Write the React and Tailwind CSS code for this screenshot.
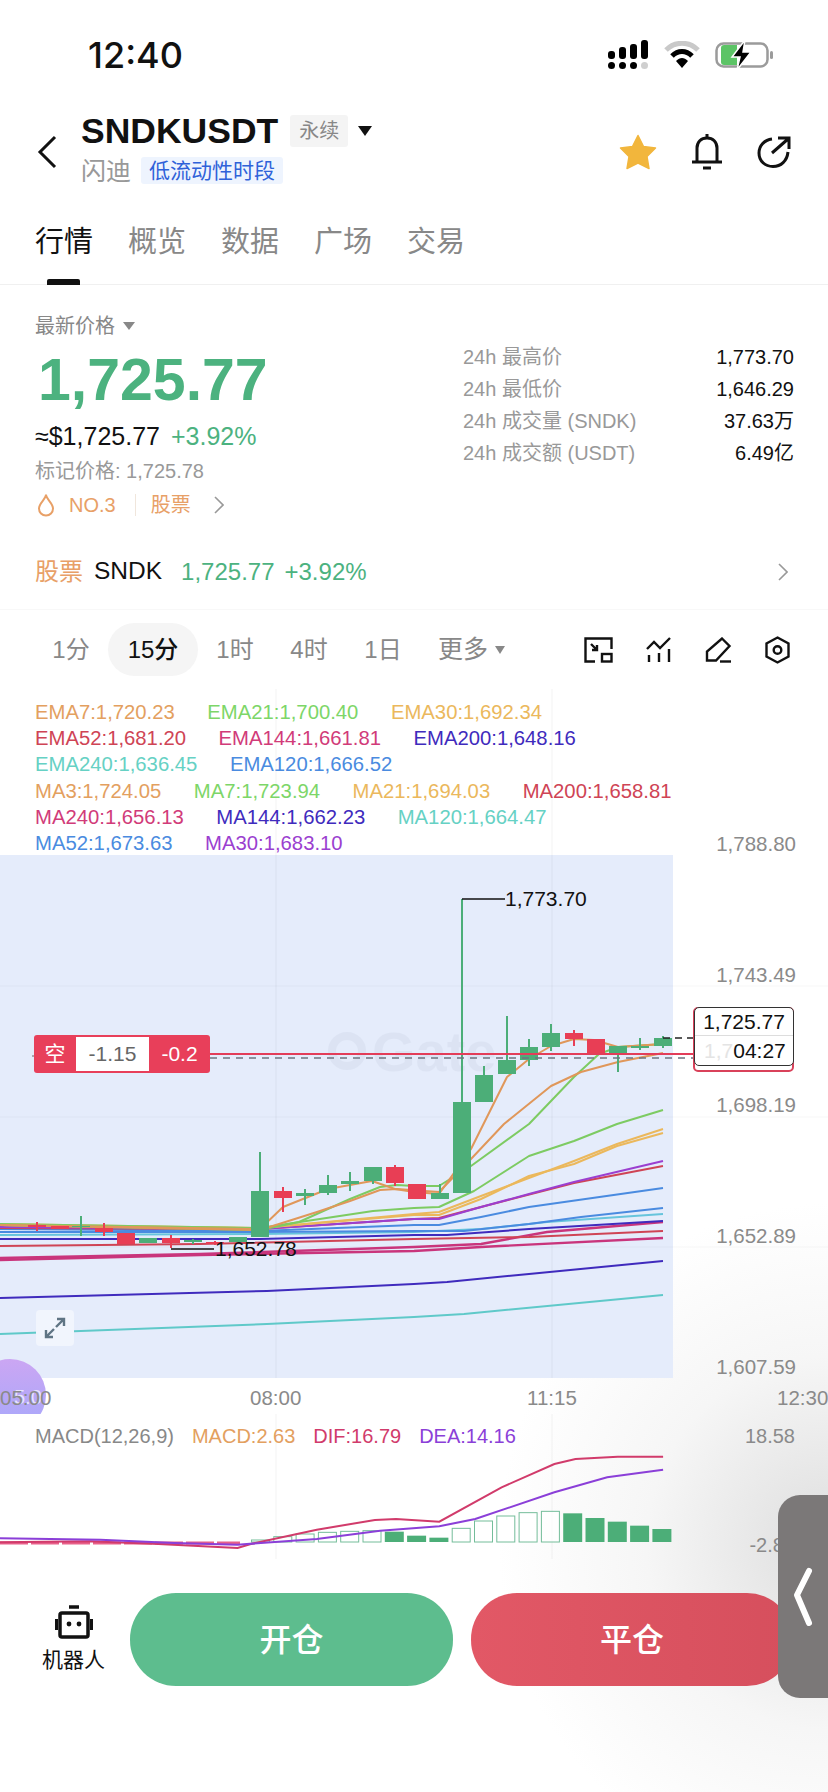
const legend = [
  [['EMA7:1,720.23', 'text-[#e3a05f]'], ['EMA21:1,700.40', 'text-[#7dd668]'], ['EMA30:1,692.34', 'text-[#ebb85c]']],
  [['EMA52:1,681.20', 'text-[#cf4455]'], ['EMA144:1,661.81', 'text-[#d13b79]'], ['EMA200:1,648.16', 'text-[#3f2bbd]']],
  [['EMA240:1,636.45', 'text-[#66d1c4]'], ['EMA120:1,666.52', 'text-[#4a8be0]']],
  [['MA3:1,724.05', 'text-[#e3a05f]'], ['MA7:1,723.94', 'text-[#7dd668]'], ['MA21:1,694.03', 'text-[#ebb85c]'], ['MA200:1,658.81', 'text-[#cf4455]']],
  [['MA240:1,656.13', 'text-[#d13b79]'], ['MA144:1,662.23', 'text-[#3f2bbd]'], ['MA120:1,664.47', 'text-[#66d1c4]']],
  [['MA52:1,673.63', 'text-[#4a8be0]'], ['MA30:1,683.10', 'text-[#9b3fd0]']],
]

// x, bodyTop, bodyBottom, wickTop, wickBottom, up
const candles = [
  [37, 1226, 1228, 1223, 1232, 0],
  [60, 1227, 1230, 1227, 1230, 0],
  [81, 1227, 1228, 1217, 1237, 1],
  [104, 1229, 1233, 1224, 1237, 0],
  [126, 1234, 1245, 1234, 1245, 0],
  [148, 1239, 1244, 1239, 1244, 1],
  [171, 1239, 1244, 1236, 1249, 0],
  [193, 1241, 1243, 1240, 1245, 1],
  [215, 1243, 1245, 1242, 1246, 0],
  [238, 1238, 1243, 1238, 1243, 1],
  [260, 1192, 1238, 1153, 1238, 1],
  [283, 1192, 1199, 1188, 1213, 0],
  [305, 1194, 1197, 1190, 1206, 1],
  [328, 1186, 1194, 1176, 1196, 1],
  [350, 1182, 1185, 1173, 1192, 1],
  [373, 1168, 1182, 1168, 1185, 1],
  [395, 1168, 1184, 1166, 1187, 0],
  [417, 1185, 1200, 1185, 1200, 0],
  [440, 1194, 1200, 1185, 1200, 1],
  [462, 1103, 1194, 900, 1194, 1],
  [484, 1076, 1103, 1067, 1103, 1],
  [507, 1061, 1075, 1017, 1075, 1],
  [529, 1048, 1061, 1040, 1067, 1],
  [551, 1034, 1048, 1025, 1052, 1],
  [574, 1034, 1040, 1031, 1047, 0],
  [596, 1040, 1055, 1040, 1055, 0],
  [618, 1047, 1054, 1047, 1073, 1],
  [640, 1047, 1049, 1039, 1051, 1],
  [663, 1039, 1047, 1037, 1049, 1],
]

const lines = [
  ['#3f2bbd', 'M0 1299L267 1292L414 1285L447 1283L529 1275L663 1262'],
  ['#5fc9c9', 'M0 1335L267 1325L414 1318L464 1315L663 1296'],
  ['#c9357c', 'M0 1261L200 1256L414 1252L481 1248L663 1239'],
  ['#c9357c', 'M0 1259L200 1255L414 1248L481 1245L547 1233L663 1223'],
  ['#cf4455', 'M0 1247L200 1245L414 1240L529 1238L663 1232'],
  ['#3f2bbd', 'M0 1240L260 1240L414 1236L447 1236L529 1230L663 1222'],
  ['#66c4dc', 'M0 1236L260 1235L414 1233L481 1230L547 1223L663 1215'],
  ['#4a8be0', 'M0 1233L260 1233L414 1232L464 1232L529 1225L581 1218L663 1209'],
  ['#4a8be0', 'M0 1230L260 1232L414 1226L439 1226L481 1218L529 1208L663 1189'],
  ['#cf4455', 'M0 1229L260 1230L414 1220L439 1219L481 1208L574 1184L663 1167'],
  ['#9b3fd0', 'M0 1228L260 1230L414 1220L439 1220L481 1208L529 1195L574 1183L663 1162'],
  ['#ebb85c', 'M0 1226L260 1229L414 1216L439 1216L481 1200L529 1177L574 1165L617 1147L663 1134'],
  ['#ebb85c', 'M0 1225L260 1229L414 1215L439 1213L481 1197L574 1162L617 1145L663 1130'],
  ['#7dcb62', 'M0 1225L260 1229L373 1212L414 1209L439 1208L474 1192L529 1157L574 1142L617 1125L663 1111'],
  ['#7dcb62', 'M0 1226L260 1231L299 1223L350 1200L380 1188L397 1186L414 1187L439 1187L471 1167L529 1125L574 1078L599 1055L618 1048L663 1045'],
  ['#e0975a', 'M0 1226L260 1231L317 1213L350 1202L380 1191L397 1190L439 1193L471 1160L504 1125L551 1087L581 1073L618 1063L663 1054'],
  ['#e0975a', 'M0 1226L260 1230L283 1208L328 1190L372 1182L395 1190L414 1193L439 1195L471 1150L507 1078L529 1060L551 1047L574 1040L594 1041L618 1048L663 1045'],
]

const yLabels = [
  ['1,788.80', 845],
  ['1,743.49', 976],
  ['1,698.19', 1106],
  ['1,652.89', 1237],
  ['1,607.59', 1368],
]

const macdBars = [
  [483, 0], [473, 0], [465, 0], [460, 0], [457, 0], [455, 0], [458, 1], [470, 1], [476, 1],
  [448, 0], [426, 0], [411, 0], [401, 0], [397, 0], [403, 1], [417, 1], [428, 1], [440, 1], [450, 1],
]

function StatusIcons() {
  return (
    <div className="flex items-center gap-[15px]">
      <svg width="42" height="30" viewBox="0 0 42 30">
        <rect x="1" y="11" width="7" height="8" rx="3" fill="#000" />
        <rect x="12" y="7" width="7" height="12" rx="3" fill="#000" />
        <rect x="23" y="4" width="7" height="15" rx="3" fill="#000" />
        <rect x="34" y="0" width="7" height="19" rx="3" fill="#000" />
        <circle cx="4.5" cy="25.5" r="3.5" fill="#000" />
        <circle cx="15.5" cy="25.5" r="3.5" fill="#000" />
        <circle cx="26.5" cy="25.5" r="3.5" fill="#000" />
        <circle cx="37.5" cy="25.5" r="3.5" fill="#cfcfcf" />
      </svg>
      <svg width="36" height="28" viewBox="0 0 36 28">
        <path d="M2 9C11 0 25 0 34 9" fill="none" stroke="#c9c9c9" strokeWidth="5" />
        <path d="M8 15C14 9 22 9 28 15" fill="none" stroke="#000" strokeWidth="5" />
        <path d="M12 20C16 16 20 16 24 20L18 27Z" fill="#000" />
      </svg>
      <svg width="60" height="30" viewBox="0 0 60 30">
        <rect x="1.5" y="3.5" width="51" height="23" rx="7" fill="#fff" stroke="#9b9b9b" strokeWidth="2.5" />
        <path d="M6 8a3 3 0 0 1 3-3H22V25H9a3 3 0 0 1-3-3Z" fill="#5cc466" />
        <path d="M30 0L17 17H25L22 30L36 12H28Z" fill="#000" stroke="#fff" strokeWidth="1.5" />
        <rect x="55" y="11" width="3" height="8" rx="1.5" fill="#9b9b9b" />
      </svg>
    </div>
  )
}

function ToolIcons() {
  return (
    <div className="flex items-center gap-[33px]">
      <svg width="29" height="26" viewBox="0 0 29 26" fill="none" stroke="#111" strokeWidth="2.4">
        <path d="M11 24.5H1.5V1.5H27.5V12" />
        <rect x="18" y="17" width="9.5" height="7.5" />
        <path d="M7 7L13 13M13 8V13H8" />
      </svg>
      <svg width="26" height="26" viewBox="0 0 26 26" fill="none" stroke="#111" strokeWidth="2.4">
        <path d="M1 12L8 5L14 11L24 1" />
        <path d="M3 18V25M13 16V25M23 12V25" />
      </svg>
      <svg width="27" height="26" viewBox="0 0 27 26" fill="none" stroke="#111" strokeWidth="2.4">
        <path d="M17 1.5L24.5 9L11 23.5H2V14.5Z" />
        <path d="M15 24.5H26" />
      </svg>
      <svg width="25" height="28" viewBox="0 0 25 28" fill="none" stroke="#111" strokeWidth="2.4">
        <path d="M12.5 1.5L23.5 7.5V20.5L12.5 26.5L1.5 20.5V7.5Z" />
        <circle cx="12.5" cy="14" r="3.8" />
      </svg>
    </div>
  )
}

function Chart() {
  return (
    <div className="relative h-[725px] overflow-hidden">
      <svg className="block" width="828" height="725" viewBox="0 690 828 725">
        <defs>
          <linearGradient id="bubble" x1="0" y1="0" x2="0" y2="1">
            <stop offset="0" stopColor="#cba6f3" />
            <stop offset="1" stopColor="#a6a8fb" />
          </linearGradient>
        </defs>
        <rect x="0" y="856" width="673" height="523" fill="#e5ecfb" />
        {[276, 552].map(x => <path key={x} d={`M${x} 690V1379`} stroke="#000" strokeOpacity="0.025" strokeWidth="2" />)}
        {[987, 1118, 1248].map(y => <path key={y} d={`M0 ${y}H828`} stroke="#000" strokeOpacity="0.035" />)}
        <g opacity="0.04" fontFamily="Liberation Sans" fontWeight="700" fontSize="56" fill="#1c2c55">
          <circle cx="347" cy="1052" r="15" fill="none" stroke="#1c2c55" strokeWidth="8" />
          <text x="372" y="1072">Gate</text>
        </g>
        {lines.map(([color, d], i) => (
          <path key={i} d={d} fill="none" stroke={color} strokeWidth={i === 2 || i === 3 ? 2.4 : 2} strokeLinejoin="round" />
        ))}
        {candles.map(([x, top, bottom, wickTop, wickBottom, up], i) => {
          const color = up ? '#4cae78' : '#e83e55'
          return (
            <g key={i}>
              <path d={`M${x} ${wickTop}V${wickBottom}`} stroke={color} strokeWidth="2" />
              <rect x={x - 9} y={top} width="18" height={bottom - top} fill={color} />
            </g>
          )
        })}
        <path d="M210 1055H693" stroke="#e33d59" strokeWidth="2" />
        <path d="M210 1059H693" stroke="#6d7480" strokeWidth="1.5" strokeDasharray="7 6" />
        <path d="M663 1039H693" stroke="#222" strokeWidth="1.5" strokeDasharray="7 5" />
        <path d="M462 900H505" stroke="#111" strokeWidth="1.5" />
        <path d="M171 1250H214" stroke="#111" strokeWidth="1.5" />
        <g fontFamily="Liberation Sans" fontSize="21" fill="#111">
          <text x="505" y="907">1,773.70</text>
          <text x="215" y="1257">1,652.78</text>
        </g>
        <circle cx="10" cy="1396" r="36" fill="url(#bubble)" />
        <text x="14" y="1405" fontFamily="Liberation Sans" fontSize="20" fill="#fff" fillOpacity="0.7">5.0</text>
        <g fontFamily="Liberation Sans" fontSize="20.5" fill="#8a8a8a" textAnchor="end">
          {yLabels.map(([label, y]) => <text key={label} x="796" y={y + 7}>{label}</text>)}
        </g>
        <g fontFamily="Liberation Sans" fontSize="20.5" fill="#8a8a8a">
          <text x="0" y="1406">05:00</text>
          <text x="250" y="1406">08:00</text>
          <text x="527" y="1406">11:15</text>
          <text x="777" y="1406">12:30</text>
        </g>
      </svg>

      <div className="absolute left-[35px] top-[10px] flex flex-col text-[20.3px] leading-[26.2px]">
        {legend.map((row, i) => (
          <div key={i} className="flex gap-[32.5px] whitespace-nowrap">
            {row.map(([text, color]) => <span key={text} className={color}>{text}</span>)}
          </div>
        ))}
      </div>

      <div className="absolute left-[34px] top-[346px] flex h-[38px] w-[176px] items-center rounded-[3px] bg-[#e83f5a] text-[21px] text-white shadow-[-20px_2px_0_-18px_#a8a8b0]">
        <span className="w-[42px] text-center">空</span>
        <span className="flex h-[34px] w-[73px] items-center justify-center bg-white text-[#666]">-1.15</span>
        <span className="flex-1 text-center">-0.2</span>
      </div>

      <div className="absolute left-[693px] top-[318px] h-[65px] w-[101px] rounded-[5px] border-2 border-[#d9415a] bg-white" />
      <div className="absolute left-[694px] top-[318px] flex h-[59px] w-[100px] flex-col rounded-[5px] border border-[#333] bg-white text-[21px] leading-none text-[#111]">
        <div className="flex h-[28px] items-center justify-center border-b border-[#ddd]">1,725.77</div>
        <div className="flex flex-1 items-center justify-between pl-[9px] pr-[8px]">
          <span className="text-[#e4e4e4]">1,7</span>
          <span>04:27</span>
        </div>
      </div>

      <div className="absolute left-[36px] top-[621px] flex h-[36px] w-[38px] items-center justify-center rounded-[4px] bg-[#f1f5fd]">
        <svg width="22" height="22" viewBox="0 0 22 22" fill="none" stroke="#5f7484" strokeWidth="2.4">
          <path d="M12 10L20 2M13 2H20V9" />
          <path d="M10 12L2 20M2 13V20H9" />
        </svg>
      </div>
    </div>
  )
}

function Macd() {
  const px = x => x / 1.894
  const py = y => 1380 + y / 3
  const toPath = pts => pts.map(([x, y], i) => `${i ? 'L' : 'M'}${px(x).toFixed(1)} ${py(y).toFixed(1)}`).join('')
  const dif = [[0, 490], [170, 487], [300, 495], [450, 507], [475, 495], [600, 452], [710, 423], [750, 420], [832, 428], [950, 325], [1050, 255], [1090, 240], [1170, 233], [1256, 233]]
  const dea = [[0, 478], [190, 482], [330, 492], [450, 497], [600, 480], [720, 455], [832, 442], [900, 420], [1050, 340], [1150, 295], [1256, 272]]
  return (
    <div className="relative h-[145px]">
      <svg className="block" width="828" height="145" viewBox="0 1415 828 145">
        {[276, 552].map(x => <path key={x} d={`M${x} 1415V1560`} stroke="#000" strokeOpacity="0.025" strokeWidth="2" />)}
        {macdBars.map(([top, filled], i) => {
          const x = 251 + i * 22.3
          const y = py(top)
          return filled
            ? <rect key={i} x={x} y={y} width="19" height={1543 - y} fill="#4cae78" />
            : <rect key={i} x={x + 0.5} y={y} width="18" height={1543 - y} fill="#fff" fillOpacity="0.7" stroke="#74bd9a" />
        })}
        <path d="M0 1544H240" stroke="#e8608a" strokeWidth="3" strokeDasharray="28 3" />
        <path d={toPath(dif)} fill="none" stroke="#d13b6b" strokeWidth="2" />
        <path d={toPath(dea)} fill="none" stroke="#8b3fd8" strokeWidth="2" />
        <text x="795" y="1553" textAnchor="end" fontFamily="Liberation Sans" fontSize="20" fill="#8a8a8a">-2.80</text>
      </svg>
      <div className="absolute left-[35px] right-[33px] top-[9px] flex items-center gap-[18px] whitespace-nowrap text-[20px] leading-[26px]">
        <span className="text-[#888]">MACD(12,26,9)</span>
        <span className="text-[#e3a05f]">MACD:2.63</span>
        <span className="text-[#d13b6b]">DIF:16.79</span>
        <span className="text-[#8b3fd8]">DEA:14.16</span>
        <span className="ml-auto text-[#8a8a8a]">18.58</span>
      </div>
    </div>
  )
}

export default function App() {
  const stats = [
    ['24h 最高价', '1,773.70'],
    ['24h 最低价', '1,646.29'],
    ['24h 成交量 (SNDK)', '37.63万'],
    ['24h 成交额 (USDT)', '6.49亿'],
  ]
  const intervals = ['1分', '15分', '1时', '4时', '1日']
  return (
    <div className="relative h-[1792px] w-[828px] overflow-hidden bg-white font-['Liberation_Sans','Noto_Sans_CJK_SC',sans-serif] text-[#111]">
      <div className="absolute bottom-0 right-0 h-[592px] w-[400px] bg-[radial-gradient(330px_340px_at_100%_58%,#dedede,#f6f6f6_55%,#ffffff00)]" />

      {/* status bar */}
      <div className="relative flex h-[110px] items-center justify-between pl-[88px] pr-[53px]">
        <span className="font-['Inter'] text-[36px] font-medium">12:40</span>
        <StatusIcons />
      </div>

      {/* header */}
      <div className="relative flex h-[90px] items-center pb-[6px] pl-[37px] pr-[37px]">
        <svg width="20" height="34" viewBox="0 0 20 34" fill="none" stroke="#111" strokeWidth="3">
          <path d="M18 2L3 17L18 32" />
        </svg>
        <div className="mb-[8px] ml-[24px] flex flex-col gap-[7px]">
          <div className="flex items-center">
            <span className="text-[35.5px] font-bold leading-[38px]">SNDKUSDT</span>
            <span className="ml-[12px] rounded-[3px] bg-[#f4f4f4] px-[9px] py-[2px] text-[20px] leading-[28px] text-[#888]">永续</span>
            <span className="ml-[10px] h-0 w-0 border-x-[7.5px] border-t-[10px] border-x-transparent border-t-[#111]" />
          </div>
          <div className="flex items-center">
            <span className="text-[25px] leading-[28px] text-[#999]">闪迪</span>
            <span className="ml-[10px] rounded-[3px] bg-[#eef4fe] px-[8px] text-[21px] leading-[27px] text-[#2f62d9]">低流动性时段</span>
          </div>
        </div>
        <div className="ml-auto flex items-center gap-[34px]">
          <svg width="38" height="36" viewBox="0 0 38 36">
            <path d="M19 1.5L24.5 12.5L36.5 14L28 22.5L30 34.5L19 29L8 34.5L10 22.5L1.5 14L13.5 12.5Z" fill="#f2b63c" stroke="#f2b63c" strokeWidth="1.5" strokeLinejoin="round" />
          </svg>
          <svg width="32" height="38" viewBox="0 0 32 38" fill="none" stroke="#111" strokeWidth="3">
            <path d="M1 29H31M6 29V15C6 9 10 5 16 5S26 9 26 15V29" />
            <path d="M16 1V5M12 35H20" />
          </svg>
          <svg width="34" height="32" viewBox="0 0 34 32" fill="none" stroke="#111" strokeWidth="3">
            <path d="M15 3C7 4 2 10 2 17C2 25 8 30.5 16 30.5C24 30.5 30 25 31 16" />
            <path d="M15 17L31 3M21 2H32V13" />
          </svg>
        </div>
      </div>

      {/* tabs */}
      <div className="relative flex h-[85px] items-start gap-[35px] border-b border-[#f0f0f0] pl-[35px] pt-[23px] text-[29px] leading-[38px] text-[#888]">
        <span className="text-[#111]">行情</span>
        <span>概览</span>
        <span>数据</span>
        <span>广场</span>
        <span>交易</span>
        <span className="absolute bottom-[-1px] left-[47px] h-[6px] w-[33px] rounded-t-[2px] bg-[#111]" />
      </div>

      {/* price block */}
      <div className="relative flex h-[245px] pl-[35px] pr-[34px] pt-[29px]">
        <div className="flex w-[428px] flex-col">
          <div className="flex items-center text-[20px] leading-[24px] text-[#888]">
            最新价格
            <span className="ml-[8px] h-0 w-0 border-x-[6px] border-t-[8px] border-x-transparent border-t-[#888]" />
          </div>
          <div className="ml-[3px] mt-[8px] text-[59px] font-bold leading-[68px] text-[#4cb27f]">1,725.77</div>
          <div className="mt-[8px] flex items-center text-[25px] leading-[28px]">
            <span className="font-medium">≈$1,725.77</span>
            <span className="ml-[11px] text-[#4cb27f]">+3.92%</span>
          </div>
          <div className="mt-[9px] text-[20px] leading-[24px] text-[#999]">标记价格: 1,725.78</div>
          <div className="mt-[9px] flex items-center text-[20px] leading-[26px] text-[#e8a067]">
            <svg className="ml-[2px]" width="18" height="24" viewBox="0 0 18 24" fill="none" stroke="#e8a067" strokeWidth="2">
              <path d="M9 1.5C9 6 2 10 2 15.5C2 19.5 5 22.5 9 22.5S16 19.5 16 15.5C16 10 9 6 9 1.5Z" />
            </svg>
            <span className="ml-[14px]">NO.3</span>
            <span className="ml-[19px] h-[22px] w-px bg-[#f0e6dc]" />
            <span className="ml-[15px]">股票</span>
            <svg className="ml-[22px]" width="11" height="18" viewBox="0 0 11 18" fill="none" stroke="#999" strokeWidth="1.6">
              <path d="M2 1L10 9L2 17" />
            </svg>
          </div>
        </div>
        <div className="flex flex-1 flex-col pt-[27px] text-[20px] leading-[32px]">
          {stats.map(([label, value]) => (
            <div key={label} className="flex justify-between">
              <span className="text-[#999]">{label}</span>
              <span className="text-[#111]">{value}</span>
            </div>
          ))}
        </div>
      </div>

      {/* stock link row */}
      <div className="relative flex h-[80px] items-center border-b border-[#f8f8f8] pl-[35px] pr-[40px] pt-[4px]">
        <span className="text-[24px] text-[#e8a067]">股票</span>
        <span className="ml-[11px] text-[24.5px] font-medium">SNDK</span>
        <span className="ml-[19px] text-[24px] text-[#4cb27f]">1,725.77</span>
        <span className="ml-[10px] text-[24px] text-[#4cb27f]">+3.92%</span>
        <svg className="ml-auto" width="11" height="18" viewBox="0 0 11 18" fill="none" stroke="#999" strokeWidth="1.6">
          <path d="M2 1L10 9L2 17" />
        </svg>
      </div>

      {/* interval bar */}
      <div className="relative flex h-[79px] items-center pl-[34px] pr-[38px] text-[24px] text-[#888]">
        {intervals.map(label => (
          <span key={label} className={label === '15分' ? 'flex h-[53px] w-[90px] items-center justify-center rounded-full bg-[#f5f5f5] font-medium text-[#111]' : 'flex h-[53px] w-[74px] items-center justify-center'}>
            {label}
          </span>
        ))}
        <span className="ml-[18px] text-[25px]">更多</span>
        <span className="ml-[7px] h-0 w-0 border-x-[5px] border-t-[8px] border-x-transparent border-t-[#888]" />
        <div className="ml-auto"><ToolIcons /></div>
      </div>

      <Chart />
      <Macd />

      {/* bottom action bar */}
      <div className="relative flex items-start pl-[42px] pt-[34px]">
        <div className="mt-[12px] flex w-[63px] flex-col items-center">
          <svg width="38" height="34" viewBox="0 0 38 34" fill="none" stroke="#111">
            <path d="M14 2H24" strokeWidth="3.5" />
            <rect x="5" y="8" width="28" height="24" rx="2" strokeWidth="3.5" />
            <path d="M1.5 14V25M36.5 14V25" strokeWidth="3" />
            <circle cx="14" cy="19" r="2.4" fill="#111" stroke="none" />
            <circle cx="24" cy="19" r="2.4" fill="#111" stroke="none" />
          </svg>
          <span className="mt-[7px] whitespace-nowrap text-[21px] leading-[28px]">机器人</span>
        </div>
        <button className="ml-[25px] flex h-[93px] w-[323px] items-center justify-center rounded-[46px] bg-[#5dbd8e] text-[32px] font-medium text-white">开仓</button>
        <button className="ml-[18px] flex h-[93px] w-[322px] items-center justify-center rounded-[46px] bg-gradient-to-r from-[#e25866] to-[#d64f5d] text-[32px] font-medium text-white">平仓</button>
      </div>

      {/* floating side handle */}
      <div className="absolute left-[778px] top-[1495px] flex h-[203px] w-[60px] items-center rounded-l-[22px] bg-[#7b7878]">
        <svg className="ml-[15px]" width="20" height="60" viewBox="0 0 20 60" fill="none" stroke="#fff" strokeWidth="6" strokeLinecap="round" strokeLinejoin="round">
          <path d="M16 4L4 28L16 56" />
        </svg>
      </div>
    </div>
  )
}
